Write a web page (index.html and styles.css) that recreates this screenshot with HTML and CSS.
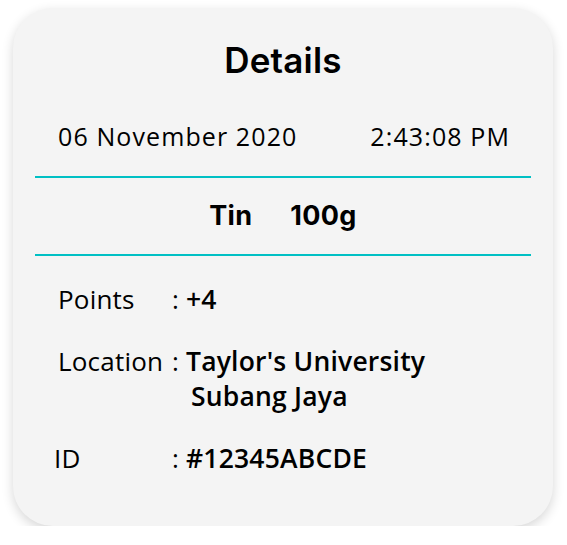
FILE: index.html
```html
<!DOCTYPE html>
<html lang="en">
<head>
    <meta charset="UTF-8">
    <meta name="viewport" content="width=device-width, initial-scale=1.0">
    <title>Details</title>
    <link rel="stylesheet" href="styles.css">
</head>
<body>

<div class="card">
    <h2 class="card-title">Details</h2>

    <div class="date-row">
        <span>06 November 2020</span>
        <span>2:43:08 PM</span>
    </div>

    <div class="item-row">
        <span>Tin</span>
        <span>100g</span>
    </div>

    <div class="info">
        <div class="info-row">
            <span class="label">Points</span>
            <span class="value">: <b>+4</b></span>
        </div>
        <div class="info-row">
            <span class="label">Location</span>
            <span class="value">: <b>Taylor's University</b><br><b class="indent">Subang Jaya</b></span>
        </div>
        <div class="info-row">
            <span class="label label-id">ID</span>
            <span class="value">: <b>#12345ABCDE</b></span>
        </div>
    </div>
</div>

</body>
</html>
```

FILE: styles.css
```css
body {
    margin: 0;
    background-color: #ffffff;
    font-family: "Open Sans", "Liberation Sans", sans-serif;
    color: #000000;
}

.card {
    box-sizing: border-box;
    width: 540px;
    height: 518px;
    margin: 8px 0 0 13px;
    padding: 32px 22px 0 22px;
    background-color: #f4f4f4;
    border-radius: 40px;
    box-shadow: 0 4px 12px rgba(0, 0, 0, 0.16);
}

.card-title {
    margin: 0;
    font-family: Inter, "Liberation Sans", sans-serif;
    font-size: 35px;
    font-weight: 600;
    letter-spacing: 0.2px;
    line-height: 40px;
    text-align: center;
}

.date-row {
    display: flex;
    justify-content: space-between;
    margin-top: 40px;
    padding: 0 21px 0 23px;
    font-size: 25px;
    letter-spacing: 1.1px;
    line-height: 32px;
}

.item-row {
    display: flex;
    justify-content: center;
    gap: 38px;
    margin-top: 24px;
    padding: 23px 0;
    border-top: 2px solid #00c0c4;
    border-bottom: 2px solid #00c0c4;
    font-family: Inter, "Liberation Sans", sans-serif;
    font-size: 27px;
    font-weight: 700;
    letter-spacing: 0.3px;
    line-height: 30px;
}

.info {
    display: flex;
    flex-direction: column;
    gap: 27px;
    padding: 26px 0 0 23px;
}

.info-row {
    display: flex;
    font-size: 26px;
    letter-spacing: 0.2px;
    line-height: 35px;
}

.label {
    width: 114px;
    flex-shrink: 0;
}

.label-id {
    margin-left: -4px;
    width: 118px;
}

.value b {
    font-size: 26.5px;
    font-weight: 600;
}

.value .indent {
    padding-left: 19px;
}
```
